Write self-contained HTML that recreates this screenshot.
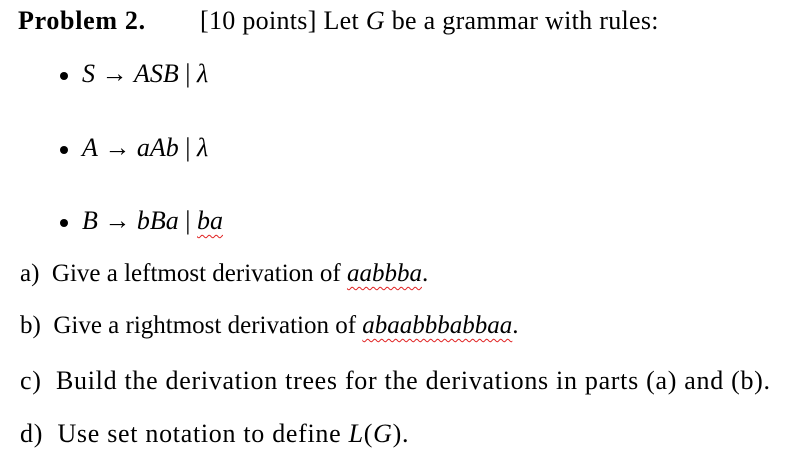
<!DOCTYPE html>
<html><head><meta charset="utf-8"><style>
html,body{margin:0;padding:0;background:#fff;width:800px;height:464px;overflow:hidden}
body{font-family:"Liberation Serif",serif;color:#000;font-size:26px;position:relative}
.l{position:absolute;white-space:nowrap;line-height:1;letter-spacing:0.7px}
i{font-style:italic}
.w{text-decoration:underline wavy #e02020;text-decoration-thickness:1px;text-underline-offset:5px}
.b{position:absolute;width:8px;height:8px;border-radius:50%;background:#000}
.r{letter-spacing:0}
</style></head><body>
<div class="l" style="left:18px;top:8px"><b>Problem 2.</b></div>
<div class="l" style="left:200px;top:8px;letter-spacing:0.3px">[10 points] Let <i>G</i> be a grammar with rules:</div>

<div class="b" style="left:60px;top:72px"></div>
<div class="l r" style="left:82px;top:61px"><i>S</i> → <i>ASB</i> | <i>λ</i></div>

<div class="b" style="left:60px;top:146px"></div>
<div class="l r" style="left:82px;top:135px"><i>A</i> → <i>aAb</i> | <i>λ</i></div>

<div class="b" style="left:60px;top:219px"></div>
<div class="l r" style="left:82px;top:208px"><i>B</i> → <i>bBa</i> | <i class="w">ba</i></div>

<div class="l r" style="left:20px;top:261px;font-size:25px">a)&nbsp; Give a leftmost derivation of <i class="w">aabbba</i>.</div>
<div class="l r" style="left:20px;top:313px;font-size:25px">b)&nbsp; Give a rightmost derivation of <i class="w">abaabbbabbaa</i>.</div>
<div class="l" style="left:20px;top:368px">c)&nbsp; Build the derivation trees for the derivations in parts (a) and (b).</div>
<div class="l" style="left:20px;top:421px">d)&nbsp; Use set notation to define <i>L</i>(<i>G</i>).</div>
</body></html>
